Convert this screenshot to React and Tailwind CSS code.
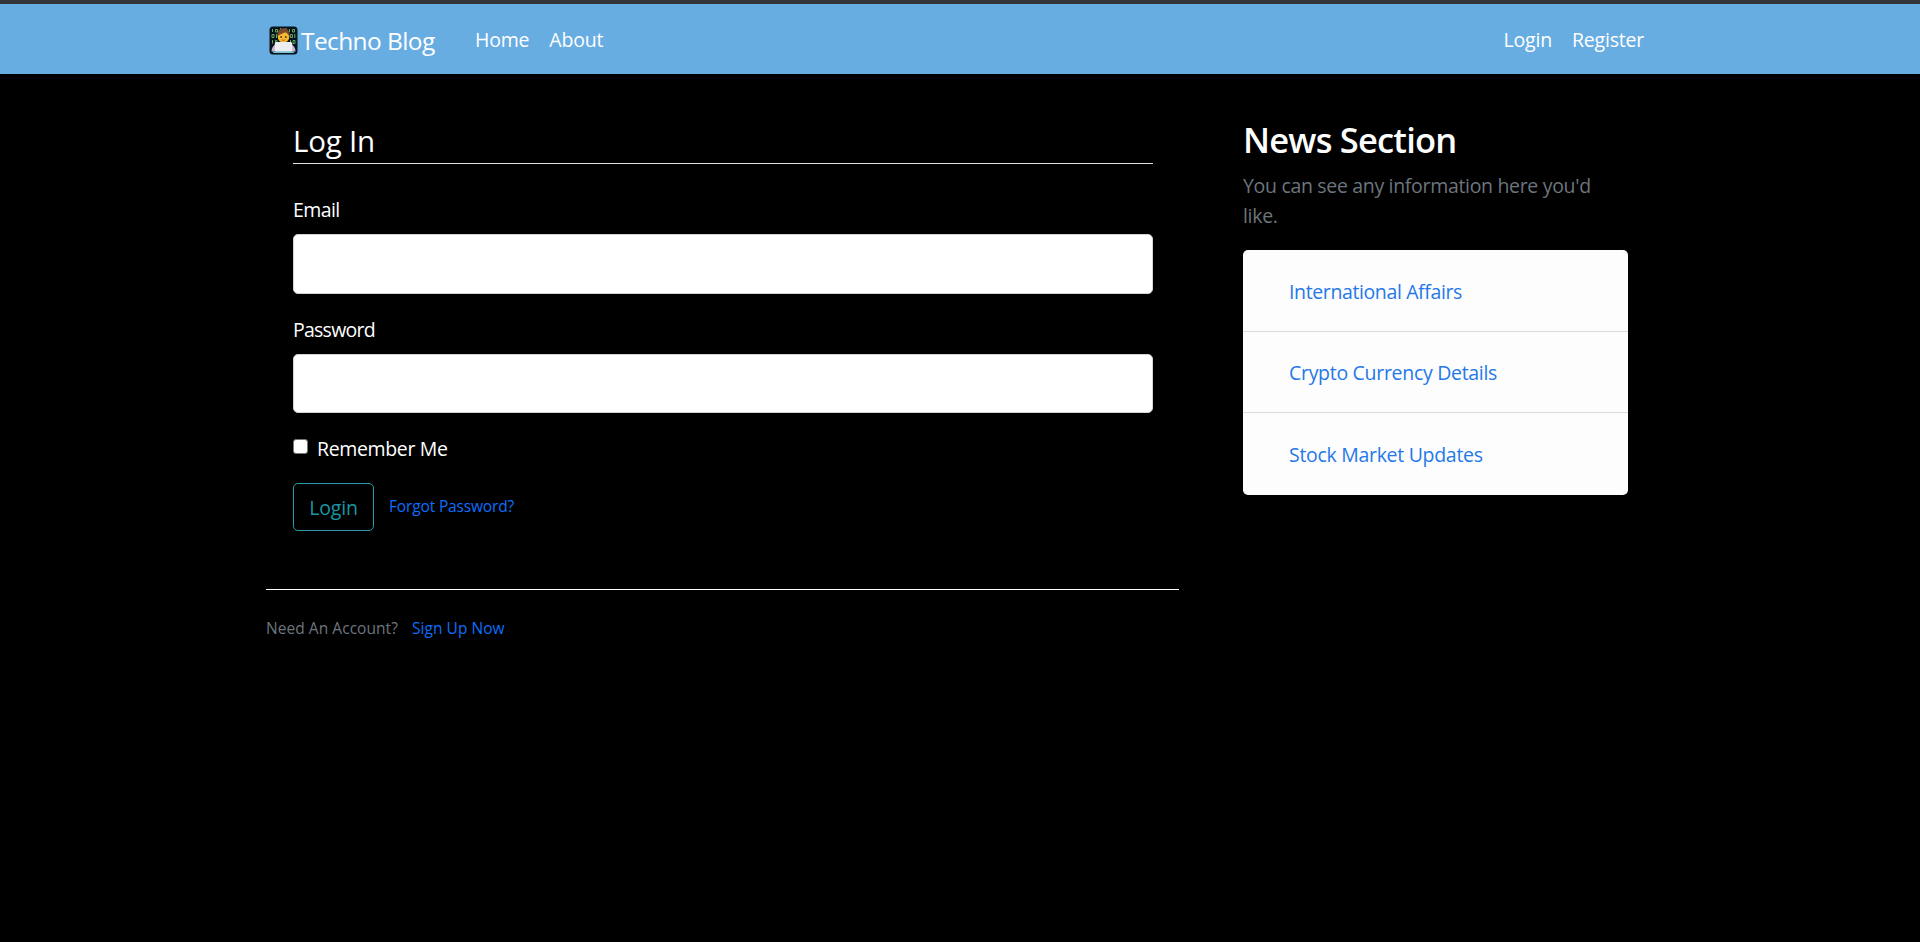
import React from "react";

function CoderIcon() {
  return (
    <svg viewBox="0 0 29 29" className="h-[29px] w-[29px] shrink-0">
      <rect x="0.5" y="0.5" width="28" height="28" rx="3.5" fill="#08131b" />
      <g fill="none" stroke="#62a862" strokeWidth="1">
        <path d="M3.5 3v3M6.500 3.500h2v2.500h-2zM20.500 3v3M23.500 3.500h2v2.500h-2zM3 8.500h2v3h-2zM7.500 8v4M21.500 8.500h2v3h-2zM25.800 8v4M3.500 14v3.500M6.500 14.500h1.500v3h-1.500zM21.500 14v3.500M24 14.500h2v3h-2zM11.500 2v2M17 2v2" />
      </g>
      <path d="M2.500 25.500c0-4 2-6.500 5-7.500h14c3 1 5 3.500 5 7.500z" fill="#c9b4d0" />
      <circle cx="14.500" cy="10.800" r="5.800" fill="#f7b92f" />
      <path d="M8.500 11c-.8-5.500 1.800-8.800 6-8.800s6.900 3.300 6 8.800c-.8-2.200-2.200-3.800-4.400-4.800-2.400 1.700-6.300 1.800-7.600 4.800z" fill="#7b4a2b" />
      <circle cx="12.200" cy="11" r="0.900" fill="#4a2d18" />
      <circle cx="16.800" cy="11" r="0.900" fill="#4a2d18" />
      <path d="M12.800 13.800q1.700 1 3.400 0" stroke="#9a5a1a" fill="none" strokeWidth="0.800" />
      <rect x="5.800" y="16" width="17.400" height="9.800" rx="1.500" fill="#eceef1" />
      <path d="M3.500 25.600h22l-1 1.400h-20z" fill="#78c4d8" />
    </svg>
  );
}

function Field({ label, type, labelClass, inputClass }) {
  return (
    <div className="flex flex-col">
      <label className={"h-[30px] leading-[30px] " + labelClass}>{label}</label>
      <input type={type} className={"mt-[9px] w-full rounded-[5px] border border-[#ced4da] bg-white " + inputClass} />
    </div>
  );
}

const news = [
  { title: "International Affairs", className: "h-[82px] border-b leading-[84px] tracking-[-0.38px]" },
  { title: "Crypto Currency Details", className: "h-[81px] border-b leading-[81px] tracking-[-0.3px]" },
  { title: "Stock Market Updates", className: "h-[82px] leading-[84px] tracking-[-0.3px]" },
];

export default function App() {
  return (
    <div className="min-h-[942px] bg-black font-['Open_Sans',sans-serif] text-[19.5px] text-white">
      <header className="h-[74px] border-t-4 border-[#343538] bg-[#67ade2]">
        <nav className="flex h-[70px] items-center pl-[269px] pr-[276px] pt-[3px] tracking-[-0.2px]">
          <CoderIcon />
          <a className="ml-[3px] w-[134px] whitespace-nowrap pt-[2px] text-[24.5px] tracking-[-0.6px]">Techno Blog</a>
          <a className="ml-[40px] pb-[1px]">Home</a>
          <a className="ml-[20px] pb-[1px]">About</a>
          <a className="ml-auto pb-[1px]">Login</a>
          <a className="ml-[20px] pb-[1px]">Register</a>
        </nav>
      </header>
      <main className="flex">
        <section className="ml-[266px] w-[913px]">
          <form className="pl-[27px] pr-[26px] pt-[49px]">
            <h2 className="h-[41px] border-b border-[#dee2e6] text-[29.5px] leading-[36px] tracking-[-0.2px]">Log In</h2>
            <div className="mt-[31px]">
              <Field label="Email" type="text" labelClass="tracking-[-0.6px]" inputClass="h-[60px]" />
            </div>
            <div className="mt-[21px]">
              <Field label="Password" type="password" labelClass="tracking-[-0.75px]" inputClass="h-[59px]" />
            </div>
            <div className="mt-[20px] flex h-[30px]">
              <span className="mt-[6px] h-[15px] w-[15px] rounded-[3px] border border-[#767676] bg-white" />
              <span className="ml-[9px] pt-px leading-[30px] tracking-[-0.35px]">Remember Me</span>
            </div>
            <div className="mt-[20px] flex">
              <button type="button" className="h-[48px] w-[81px] rounded-[5px] border border-[#2a9ba6] pt-[2px] tracking-[-0.2px] text-[#1a97a4]">
                Login
              </button>
              <a className="ml-[15px] text-[15.5px] leading-[46px] tracking-[-0.15px] text-[#0d6efd]">Forgot Password?</a>
            </div>
          </form>
          <div className="mt-[58px] h-px bg-white" />
          <div className="mt-[23px] flex text-[15.5px] leading-[31px]">
            <span className="tracking-[0.05px] text-[#6c757d]">Need An Account?</span>
            <a className="ml-[14px] tracking-[0.05px] text-[#0d6efd]">Sign Up Now</a>
          </div>
        </section>
        <aside className="ml-[64px] w-[385px] pt-[46px]">
          <h3 className="text-[34.5px] font-semibold leading-[40px] tracking-[-0.8px]">News Section</h3>
          <p className="mt-[11px] leading-[30px] tracking-[-0.32px] text-[#6c757d]">You can see any information here you'd like.</p>
          <ul className="mt-[19px] rounded-[5px] bg-[#fdfdfe]">
            {news.map((n) => (
              <li key={n.title} className={"border-[#d9dbdf] pl-[46px] text-[#2478e8] " + n.className}>
                {n.title}
              </li>
            ))}
          </ul>
        </aside>
      </main>
    </div>
  );
}
